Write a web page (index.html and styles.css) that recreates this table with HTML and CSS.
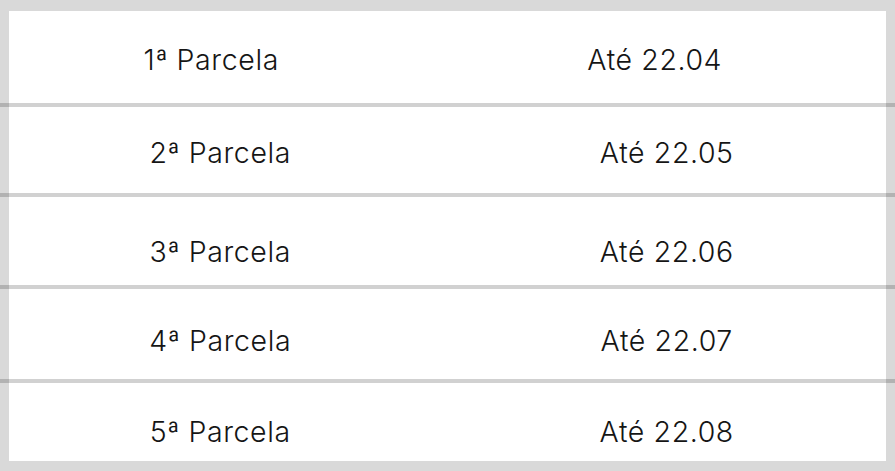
FILE: index.html
```html
<!DOCTYPE html>
<html>
<head>
    <meta charset="utf-8">
    <title>Parcelas</title>
    <link rel="stylesheet" href="styles.css">
</head>
<body>
    <div class="table">
        <div class="row row-first">
            <div class="cell cell-name">1ª Parcela</div>
            <div class="cell cell-date">Até 22.04</div>
        </div>
        <div class="sep"></div>
        <div class="row row-2">
            <div class="cell cell-name">2ª Parcela</div>
            <div class="cell cell-date">Até 22.05</div>
        </div>
        <div class="sep"></div>
        <div class="row row-3">
            <div class="cell cell-name">3ª Parcela</div>
            <div class="cell cell-date">Até 22.06</div>
        </div>
        <div class="sep"></div>
        <div class="row row-4">
            <div class="cell cell-name">4ª Parcela</div>
            <div class="cell cell-date">Até 22.07</div>
        </div>
        <div class="sep"></div>
        <div class="row row-5">
            <div class="cell cell-name">5ª Parcela</div>
            <div class="cell cell-date">Até 22.08</div>
        </div>
    </div>
</body>
</html>
```

FILE: styles.css
```css
html {
    background: #d9d9d9;
}
body {
    margin: 0;
    padding: 11px 9px 10px;
    font-family: Inter, "Liberation Sans", sans-serif;
    color: #151515;
}
.table {
    background: #fff;
}
.row {
    display: grid;
    grid-template-columns: 1fr 1fr;
    align-items: center;
    font-size: 28.5px;
    font-weight: 300;
    letter-spacing: 0.6px;
}
.row-first { height: 92px; }
.row-2 { height: 86px; }
.row-3 { height: 88px; }
.row-4 { height: 90px; }
.row-5 { height: 78px; }
.cell {
    text-align: center;
    padding-top: 4px;
}
.cell-name {
    padding-right: 16px;
}
.row-first .cell-name {
    padding-right: 34px;
}
.row-first .cell-date {
    padding-right: 24px;
}
.row-3 .cell { padding-top: 20px; }
.row-4 .cell { padding-top: 12px; }
.row-5 .cell { padding-top: 18px; }
.sep {
    height: 4px;
    margin: 0 -9px;
    background: rgba(0, 0, 0, 0.18);
}
```
